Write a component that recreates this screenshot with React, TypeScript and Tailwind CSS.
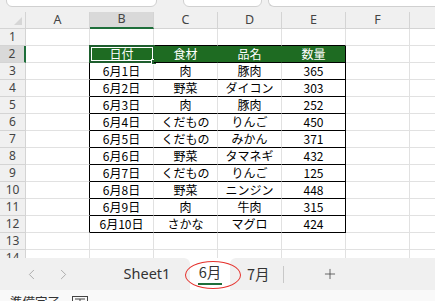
import { ChevronLeft, ChevronRight, Plus } from 'lucide-react'

const cols = ['A', 'B', 'C', 'D', 'E', 'F']

const data: string[][] = [
  ['6月1日', '肉', '豚肉', '365'],
  ['6月2日', '野菜', 'ダイコン', '303'],
  ['6月3日', '肉', '豚肉', '252'],
  ['6月4日', 'くだもの', 'りんご', '450'],
  ['6月5日', 'くだもの', 'みかん', '371'],
  ['6月6日', '野菜', 'タマネギ', '432'],
  ['6月7日', 'くだもの', 'りんご', '125'],
  ['6月8日', '野菜', 'ニンジン', '448'],
  ['6月9日', '肉', '牛肉', '315'],
  ['6月10日', 'さかな', 'マグロ', '424'],
]

const header = ['日付', '食材', '品名', '数量']

function RowHeader({ n, active }: { n: number; active?: boolean }) {
  return (
    <div
      className={
        active
          ? 'w-[26px] h-[17px] shrink-0 flex items-center justify-center bg-[#d9d9d9] border-b border-[#d4d4d4] border-r-2 border-r-[#1e6e3a] text-[#444] text-[12px] leading-none font-["Noto_Sans"]'
          : 'w-[26px] h-[17px] shrink-0 flex items-center justify-center bg-[#f0f0f0] border-b border-r border-[#d4d4d4] text-[#444] text-[12px] leading-none font-["Noto_Sans"]'
      }
    >
      {n}
    </div>
  )
}

function Cell({ className = '', children }: { className?: string; children?: React.ReactNode }) {
  return (
    <div className={'w-[64px] h-[17px] shrink-0 flex items-center justify-center border-b border-r border-[#e1e1e1] text-[12px] leading-none text-black ' + className}>
      {children}
    </div>
  )
}

function Filler({ className = '' }: { className?: string }) {
  return <div className={'flex-1 h-[17px] border-b border-[#e1e1e1] ' + className} />
}

export default function App() {
  const rows = Array.from({ length: 14 }, (_, i) => i + 1)

  return (
    <div className='w-[435px] h-[301px] overflow-hidden bg-white flex flex-col font-["Noto_Sans_CJK_JP",sans-serif]'>
      {/* formula bar, cut off at the top */}
      <div className="h-[12px] shrink-0 bg-[#f0f0f0] flex items-start">
        <div className="ml-[6px] w-[151px] h-[17px] -mt-[10px] rounded-md border border-[#d0d0d0] bg-white" />
        <div className="ml-[26px] w-[79px] h-[17px] -mt-[10px] rounded-md border border-[#d0d0d0] bg-white" />
        <div className="ml-[6px] flex-1 h-[17px] -mt-[10px] rounded-l-md border border-r-0 border-[#d0d0d0] bg-white" />
      </div>

      {/* sheet */}
      <div className="h-[246px] shrink-0 overflow-hidden flex flex-col">
        {/* column headers */}
        <div className="flex h-[17px] shrink-0 bg-[#f0f0f0]">
          <div className="w-[26px] h-[17px] shrink-0 border-r border-b border-[#d4d4d4] relative">
            <svg width="8" height="8" viewBox="0 0 8 8" className="absolute right-[3px] bottom-[3px]">
              <path d="M8 0 L8 8 L0 8 Z" fill="#d6d6d6" />
            </svg>
          </div>
          {cols.map((c) =>
            c === 'B' ? (
              <div key={c} className='w-[64px] h-[17px] shrink-0 flex items-center justify-center bg-[#d9d9d9] border-r border-[#d4d4d4] border-b-2 border-b-[#1e6e3a] text-[#444] text-[12.5px] leading-none font-["Noto_Sans"]'>
                {c}
              </div>
            ) : (
              <div key={c} className='w-[64px] h-[17px] shrink-0 flex items-center justify-center border-r border-b border-[#d4d4d4] text-[#444] text-[12.5px] leading-none font-["Noto_Sans"]'>
                {c}
              </div>
            )
          )}
          <div className="flex-1 h-[17px] border-b border-[#d4d4d4]" />
        </div>

        {rows.map((r) => {
          const inTable = r >= 2 && r <= 12
          return (
            <div key={r} className="flex h-[17px] shrink-0">
              <RowHeader n={r} active={r === 2} />
              <Cell className={inTable ? 'border-r-black' : ''} />
              {r === 2 &&
                header.map((h, i) => (
                  <Cell
                    key={h}
                    className={
                      'relative bg-[#1e6b22] text-white border-b-black ' +
                      (i === 3 ? 'border-r-black' : 'border-r-[#1e6b22]')
                    }
                  >
                    {h}
                    {i === 0 && (
                      <div className="absolute -left-[1px] -top-[1px] w-[66px] h-[18px] border-2 border-[#1e5e2e]">
                        <div className="w-full h-full border border-white" />
                        <div className="absolute -right-[4px] -bottom-[4px] w-[6px] h-[6px] bg-[#1e5e2e] border border-white" />
                      </div>
                    )}
                  </Cell>
                ))}
              {r >= 3 &&
                r <= 12 &&
                data[r - 3].map((v, i) => (
                  <Cell key={i} className={'border-b-black ' + (i === 3 ? 'border-r-black' : '')}>
                    {v}
                  </Cell>
                ))}
              {!inTable &&
                [0, 1, 2, 3].map((i) => <Cell key={i} className={r === 1 ? 'border-b-black' : ''} />)}
              <Cell />
              <Filler />
            </div>
          )
        })}
      </div>

      {/* sheet tabs */}
      <div className="h-[32px] shrink-0 flex bg-white relative">
        <div className="w-[190px] h-full bg-[#f0f0f0] rounded-tr-[6px] flex items-center">
          <div className="w-[22px]" />
          <div className="w-[18px] flex justify-center">
            <ChevronLeft size={17} strokeWidth={1.2} className="text-[#a0a0a0]" />
          </div>
          <div className="w-[14px]" />
          <div className="w-[18px] flex justify-center">
            <ChevronRight size={17} strokeWidth={1.2} className="text-[#a0a0a0]" />
          </div>
          <div className="w-[32px]" />
          <div className='w-[86px] text-center text-[14.5px] text-[#333] font-["Noto_Sans"]'>Sheet1</div>
        </div>
        <div className="w-[40px] h-full flex flex-col items-center pt-[5px]">
          <span className="text-[14.5px] leading-[18px] text-[#333]">6月</span>
          <div className="mt-[2px] w-[24px] h-[2px] bg-[#1e6e3a]" />
        </div>
        <div className="flex-1 h-full bg-[#f0f0f0] rounded-tl-[6px] flex items-center">
          <div className="w-[53px] pl-[17px] text-[14.5px] text-[#333]">7月</div>
          <div className="w-px h-[17px] bg-[#c8c8c8]" />
          <div className="w-[92px] flex justify-center">
            <Plus size={16} strokeWidth={1.2} className="text-[#444]" />
          </div>
        </div>
        <div className="absolute left-[185px] top-[3px] w-[56px] h-[28px] rounded-[50%] border border-[#e5322d]" />
      </div>

      {/* status bar */}
      <div className="flex-1 bg-[#f9f9f9] flex items-start pl-[10px] pt-[5px]">
        <span className="text-[12.5px] leading-[14px] text-[#333]">準備完了</span>
        <svg width="16" height="12" viewBox="0 0 16 12" className="ml-[12px] mt-[1px]">
          <rect x="0.5" y="0.5" width="15" height="14" fill="none" stroke="#444" />
          <path d="M3 3 H13 M8 3 V7 M5 6 H11" stroke="#444" fill="none" />
        </svg>
      </div>
    </div>
  )
}
